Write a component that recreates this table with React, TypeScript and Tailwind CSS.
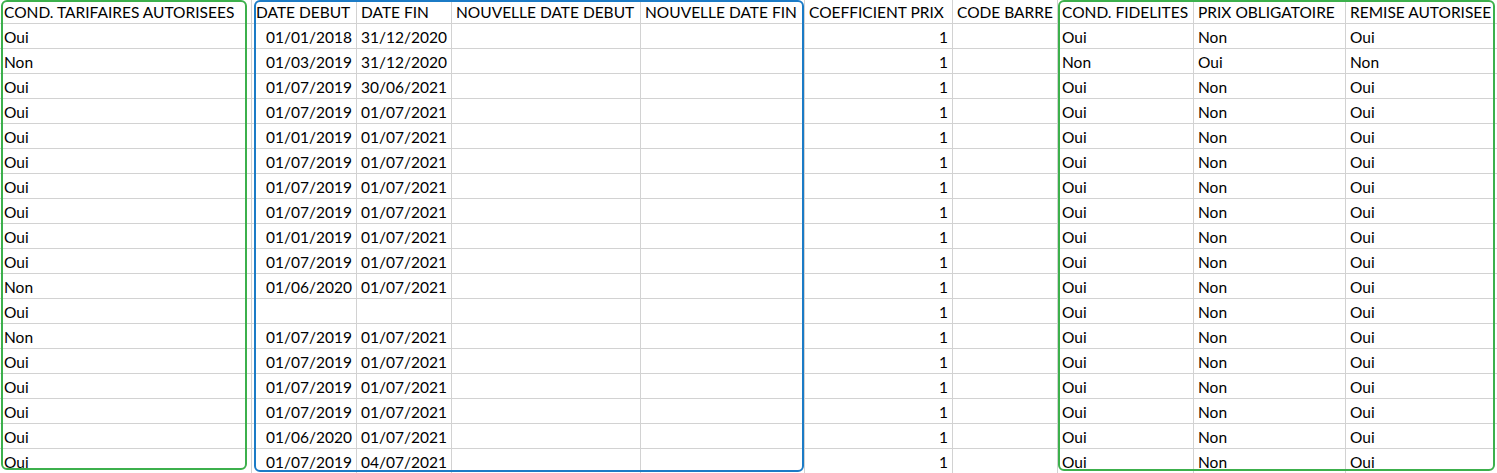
import React from "react";

type Row = {
  tarif: string;
  debut: string;
  fin: string;
  fidel: string;
  prix: string;
  remise: string;
};

const headers = [
  "COND. TARIFAIRES AUTORISEES",
  "DATE DEBUT",
  "DATE FIN",
  "NOUVELLE DATE DEBUT",
  "NOUVELLE DATE FIN",
  "COEFFICIENT PRIX",
  "CODE BARRE",
  "COND. FIDELITES",
  "PRIX OBLIGATOIRE",
  "REMISE AUTORISEE",
];

const std = (tarif: string, debut: string, fin: string): Row => ({
  tarif,
  debut,
  fin,
  fidel: "Oui",
  prix: "Non",
  remise: "Oui",
});

const rows: Row[] = [
  std("Oui", "01/01/2018", "31/12/2020"),
  { tarif: "Non", debut: "01/03/2019", fin: "31/12/2020", fidel: "Non", prix: "Oui", remise: "Non" },
  std("Oui", "01/07/2019", "30/06/2021"),
  std("Oui", "01/07/2019", "01/07/2021"),
  std("Oui", "01/01/2019", "01/07/2021"),
  std("Oui", "01/07/2019", "01/07/2021"),
  std("Oui", "01/07/2019", "01/07/2021"),
  std("Oui", "01/07/2019", "01/07/2021"),
  std("Oui", "01/01/2019", "01/07/2021"),
  std("Oui", "01/07/2019", "01/07/2021"),
  std("Non", "01/06/2020", "01/07/2021"),
  std("Oui", "", ""),
  std("Non", "01/07/2019", "01/07/2021"),
  std("Oui", "01/07/2019", "01/07/2021"),
  std("Oui", "01/07/2019", "01/07/2021"),
  std("Oui", "01/07/2019", "01/07/2021"),
  std("Oui", "01/06/2020", "01/07/2021"),
  std("Oui", "01/07/2019", "04/07/2021"),
];

function Cell({ children, right }: { children?: React.ReactNode; right?: boolean }) {
  return (
    <div
      className={
        "h-[25px] border-r border-b border-[#d2d2d2] flex items-end pb-[3px] overflow-hidden whitespace-nowrap leading-none " +
        (right ? "justify-end pr-[4px]" : "pl-[4px]")
      }
    >
      {children}
    </div>
  );
}

export default function App() {
  return (
    <div
      className="relative w-[1497px] h-[473px] overflow-hidden bg-white text-black"
      style={{ fontFamily: "Lato, 'Liberation Sans', sans-serif" }}
    >
      <div className="grid grid-cols-[252px_105px_95px_189px_164px_148px_105px_136px_152px_170px] text-[15.5px]">
        {headers.map((h) => (
          <div
            key={h}
            className="h-[24px] border-r border-b border-[#d2d2d2] flex items-end pb-[3px] pl-[4px] overflow-hidden whitespace-nowrap leading-none"
          >
            {h}
          </div>
        ))}
        {rows.map((r, i) => (
          <React.Fragment key={i}>
            <Cell>{r.tarif}</Cell>
            <Cell right>{r.debut}</Cell>
            <Cell>{r.fin}</Cell>
            <Cell />
            <Cell />
            <Cell right>1</Cell>
            <Cell />
            <Cell>{r.fidel}</Cell>
            <Cell>{r.prix}</Cell>
            <Cell>{r.remise}</Cell>
          </React.Fragment>
        ))}
      </div>

      {/* selection outlines drawn over the sheet */}
      <div className="absolute left-[1px] top-0 w-[246px] h-[470px] border-2 border-[#3cb04c] rounded-[6px] pointer-events-none" />
      <div className="absolute left-[254px] top-0 w-[550px] h-[472px] border-2 border-[#1b7bc6] rounded-[6px] pointer-events-none" />
      <div className="absolute left-[1058px] top-0 w-[437px] h-[471px] border-2 border-[#3cb04c] rounded-[6px] pointer-events-none" />
    </div>
  );
}
